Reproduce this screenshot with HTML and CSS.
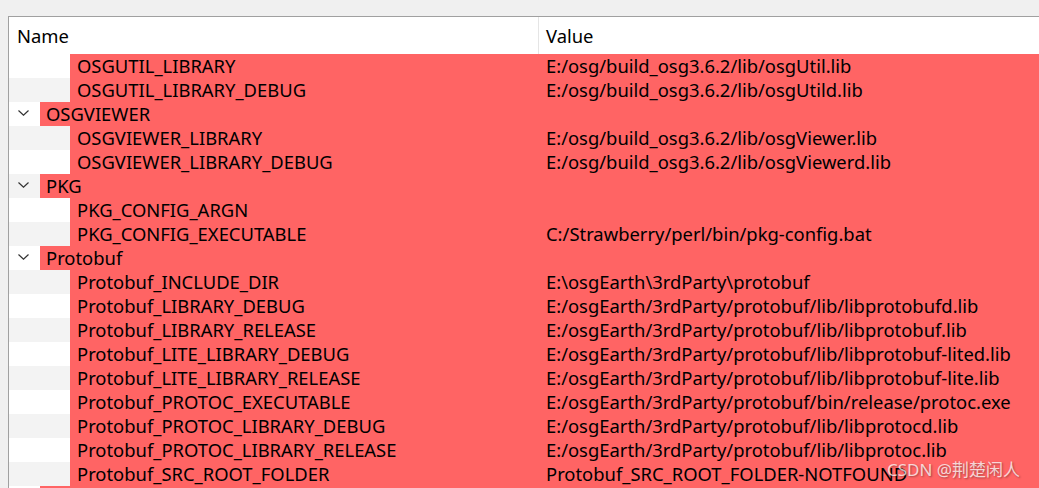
FILE: index.html
```html
<!DOCTYPE html>
<html>
<head>
<meta charset="utf-8">
<link rel="stylesheet" href="styles.css">
</head>
<body>
<div class="frame">
  <div class="header">
    <div class="hcell hname">Name</div>
    <div class="hcell hvalue">Value</div>
  </div>
  <div class="rows">
    <div class="row child odd"><div class="gutter"></div><div class="cell"><span class="name">OSGUTIL_LIBRARY</span><span class="value">E:/osg/build_osg3.6.2/lib/osgUtil.lib</span></div></div>
    <div class="row child even"><div class="gutter"></div><div class="cell"><span class="name">OSGUTIL_LIBRARY_DEBUG</span><span class="value">E:/osg/build_osg3.6.2/lib/osgUtild.lib</span></div></div>
    <div class="row group odd"><div class="gutter"><svg class="chev" width="11" height="6" viewBox="0 0 11 6"><path d="M0.5 0.5 L5.5 5.2 L10.5 0.5" fill="none" stroke="#333" stroke-width="1.2"/></svg></div><div class="cell"><span class="name">OSGVIEWER</span><span class="value"></span></div></div>
    <div class="row child even"><div class="gutter"></div><div class="cell"><span class="name">OSGVIEWER_LIBRARY</span><span class="value">E:/osg/build_osg3.6.2/lib/osgViewer.lib</span></div></div>
    <div class="row child odd"><div class="gutter"></div><div class="cell"><span class="name">OSGVIEWER_LIBRARY_DEBUG</span><span class="value">E:/osg/build_osg3.6.2/lib/osgViewerd.lib</span></div></div>
    <div class="row group even"><div class="gutter"><svg class="chev" width="11" height="6" viewBox="0 0 11 6"><path d="M0.5 0.5 L5.5 5.2 L10.5 0.5" fill="none" stroke="#333" stroke-width="1.2"/></svg></div><div class="cell"><span class="name">PKG</span><span class="value"></span></div></div>
    <div class="row child odd"><div class="gutter"></div><div class="cell"><span class="name">PKG_CONFIG_ARGN</span><span class="value"></span></div></div>
    <div class="row child even"><div class="gutter"></div><div class="cell"><span class="name">PKG_CONFIG_EXECUTABLE</span><span class="value">C:/Strawberry/perl/bin/pkg-config.bat</span></div></div>
    <div class="row group odd"><div class="gutter"><svg class="chev" width="11" height="6" viewBox="0 0 11 6"><path d="M0.5 0.5 L5.5 5.2 L10.5 0.5" fill="none" stroke="#333" stroke-width="1.2"/></svg></div><div class="cell"><span class="name">Protobuf</span><span class="value"></span></div></div>
    <div class="row child even"><div class="gutter"></div><div class="cell"><span class="name">Protobuf_INCLUDE_DIR</span><span class="value">E:\osgEarth\3rdParty\protobuf</span></div></div>
    <div class="row child odd"><div class="gutter"></div><div class="cell"><span class="name">Protobuf_LIBRARY_DEBUG</span><span class="value">E:/osgEarth/3rdParty/protobuf/lib/libprotobufd.lib</span></div></div>
    <div class="row child even"><div class="gutter"></div><div class="cell"><span class="name">Protobuf_LIBRARY_RELEASE</span><span class="value">E:/osgEarth/3rdParty/protobuf/lib/libprotobuf.lib</span></div></div>
    <div class="row child odd"><div class="gutter"></div><div class="cell"><span class="name">Protobuf_LITE_LIBRARY_DEBUG</span><span class="value">E:/osgEarth/3rdParty/protobuf/lib/libprotobuf-lited.lib</span></div></div>
    <div class="row child even"><div class="gutter"></div><div class="cell"><span class="name">Protobuf_LITE_LIBRARY_RELEASE</span><span class="value">E:/osgEarth/3rdParty/protobuf/lib/libprotobuf-lite.lib</span></div></div>
    <div class="row child odd"><div class="gutter"></div><div class="cell"><span class="name">Protobuf_PROTOC_EXECUTABLE</span><span class="value">E:/osgEarth/3rdParty/protobuf/bin/release/protoc.exe</span></div></div>
    <div class="row child even"><div class="gutter"></div><div class="cell"><span class="name">Protobuf_PROTOC_LIBRARY_DEBUG</span><span class="value">E:/osgEarth/3rdParty/protobuf/lib/libprotocd.lib</span></div></div>
    <div class="row child odd"><div class="gutter"></div><div class="cell"><span class="name">Protobuf_PROTOC_LIBRARY_RELEASE</span><span class="value">E:/osgEarth/3rdParty/protobuf/lib/libprotoc.lib</span></div></div>
    <div class="row child even"><div class="gutter"></div><div class="cell"><span class="name">Protobuf_SRC_ROOT_FOLDER</span><span class="value">Protobuf_SRC_ROOT_FOLDER-NOTFOUND</span></div></div>
    <div class="row group odd"><div class="gutter"></div><div class="cell"><span class="name"></span><span class="value"></span></div></div>
  </div>
  <div class="watermark">CSDN @荆楚闲人</div>
</div>
</body>
</html>
```

FILE: styles.css
```css
html, body {
  margin: 0;
  padding: 0;
  background: #f0f0f0;
  overflow: hidden;
}
body {
  font-family: "Noto Sans", "Noto Sans CJK SC", sans-serif;
  font-size: 18.4px;
  color: #000;
}
.frame {
  margin: 16px 0 0 8px;
  border-top: 1px solid #a0a0a0;
  border-left: 1px solid #a0a0a0;
  background: #fff;
  height: 480px;
  position: relative;
}
.header {
  display: flex;
  height: 37px;
  background: #fff;
}
.hcell {
  display: flex;
  align-items: center;
}
.hname {
  width: 521px;
  padding-left: 8px;
  border-right: 1px solid #e5e5e5;
}
.hvalue {
  padding-left: 7px;
}
.rows {
  display: flex;
  flex-direction: column;
}
.row {
  display: flex;
  height: 24px;
}
.row.odd .gutter { background: #ffffff; }
.row.even .gutter { background: #f3f3f3; }
.gutter {
  display: flex;
  align-items: center;
  flex: none;
}
.row.child .gutter { width: 61px; }
.row.group .gutter { width: 31px; }
.chev {
  margin-left: 9px;
  margin-top: -2px;
}
.cell {
  flex: 1;
  display: flex;
  align-items: center;
  background: #ff6464;
  white-space: nowrap;
  padding-bottom: 2px;
  box-sizing: border-box;
}
.name {
  flex: none;
  box-sizing: border-box;
}
.row.child .name { width: 469px; padding-left: 7px; }
.row.group .name { width: 499px; padding-left: 6px; }
.value {
  padding-left: 7px;
}
.watermark {
  position: absolute;
  left: 878px;
  top: 439px;
  font-size: 17px;
  color: rgba(255, 255, 255, 0.75);
  text-shadow: 1px 1px 2px rgba(0, 0, 0, 0.35);
  white-space: nowrap;
}
```
